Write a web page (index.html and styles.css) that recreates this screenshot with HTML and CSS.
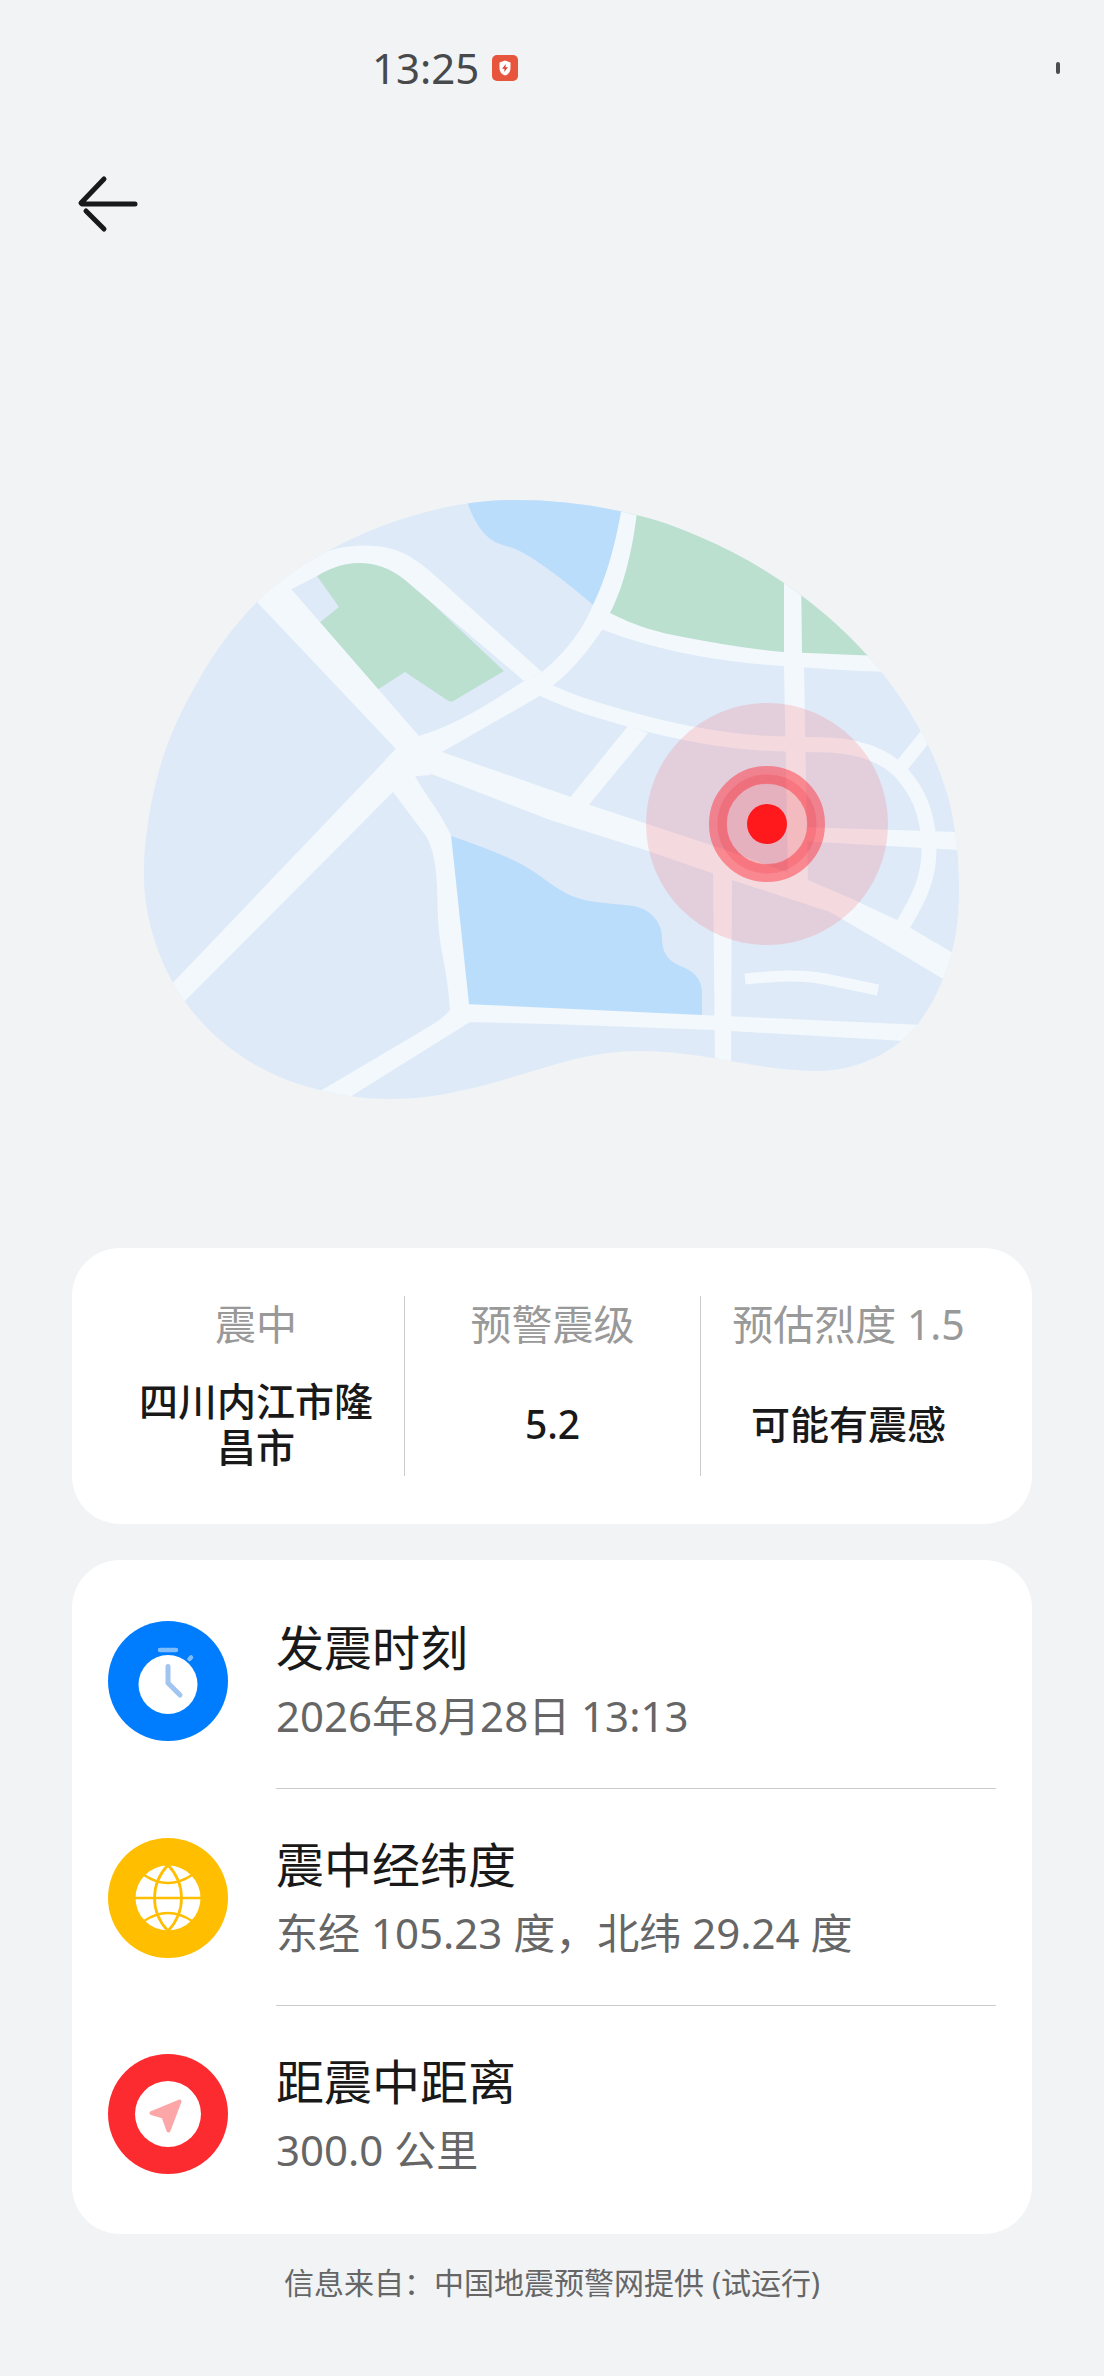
FILE: index.html
```html
<!DOCTYPE html>
<html lang="zh-CN">
<head>
<meta charset="utf-8">
<meta name="viewport" content="width=device-width, initial-scale=1">
<title>地震预警详情</title>
<link rel="stylesheet" href="styles.css">
</head>
<body>
<header class="status-bar">
  <div class="status-clock">
    <time>13:25</time>
    <svg class="status-app" viewBox="0 0 28 28" aria-hidden="true">
      <rect x="1" y="1" width="26" height="26" rx="5" fill="#e8553d"/>
      <path d="M14 6.500 L19.500 8.500 V14 C19.500 18 17 20.500 14 21.500 C11 20.500 8.500 18 8.500 14 V8.500 Z" fill="#fff"/>
      <path d="M14.800 10 L11 14.700 H13.500 L13.200 18 L17 13.300 H14.500 Z" fill="#dd4433"/>
    </svg>
  </div>
  <span class="status-mark"></span>
</header>
<nav class="top-nav">
  <button class="back" type="button" aria-label="返回">
    <svg viewBox="0 0 64 64" aria-hidden="true">
      <path d="M30 7 L7 31 L8 32 H61" /><path d="M12 39 L30 57" />
    </svg>
  </button>
</nav>
<main>
  <svg class="map" viewBox="144 500 816 600" role="img" aria-label="震中位置地图">
    <defs>
      <clipPath id="land">
        <path d="M515 500 C455 500 388 518 328 551 C300 566 278 582 257 602 C232 627 212 656 197 683 C174 722 160 760 152 800 C146 830 143 862 144 880 C145 915 156 952 173 983 C190 1012 210 1034 237 1053 C262 1071 290 1083 320 1090 C343 1096 366 1099 390 1099 C415 1099 440 1096 463 1090 C497 1083 528 1072 560 1063 C588 1055 613 1051 640 1051 C665 1051 689 1054 713 1058 C748 1064 782 1071 817 1071 C848 1071 877 1060 900 1042 C921 1025 933 1003 943 979 C955 950 959 920 959 890 C959 858 956 827 948 797 C941 773 932 751 920 730 C905 702 888 679 867 655 C847 633 826 614 802 596 C770 572 736 552 700 537 C680 528 658 520 636 515 C597 505 556 500 515 500Z"/>
      </clipPath>
    </defs>
    <g clip-path="url(#land)">
      <rect x="140" y="495" width="825" height="610" fill="#deeaf8"/>
      <g fill="#bbddfc">
        <path d="M468 495 V504 C471 513 479 530 488 537 C495 543 502 545 513 548 C532 556 560 576 600 611 L640 500 Z"/>
        <path d="M448 835 C475 844 500 853 523 865 C540 875 550 884 562 891 C583 904 613 903 633 906 C652 909 662 924 662 937 C662 952 667 961 683 967 C697 973 702 982 702 993 V1020 L460 1010 Z"/>
      </g>
      <g fill="#bbe0cf">
        <path d="M317 576 L339 607 L319 623 L377 690 L405 672 L447 700 Q451 703 455 700 L504 671 L420 592 C402 574 385 562 360 562 C344 562 330 568 317 576Z"/>
        <path d="M630 505 L605 620 L780 660 H885 V500 Z"/>
      </g>
      <g fill="#f2f8fc">
        <path d="M240 585 L257 602 L396 749 L442 752 L419 736 L292 590 L270 570Z"/>
        <path d="M396 749 L419 736 L442 752 L430 775 L408 777 L393 792 L385 760Z"/>
        <path d="M240 600 L300 530 L328 551 C350 544 390 541 415 560 C425 566 440 580 452 591 L542 672 L524 681 L405 580 C390 568 375 563 360 563 C340 563 325 571 317 576 L292 589 L257 602Z"/>
        <path d="M165 991 L396 749 L430 755 L416 768 L408 777 L393 792 L180 1006Z"/>
        <path d="M419 736 C450 727 480 710 524 681 L542 672 C560 657 580 636 593 605 C605 580 615 550 623 500 L638 500 C635 540 625 585 610 613 L602 630 C592 645 575 668 556 683 L538 697 L442 752Z"/>
        <path d="M610 613 C635 626 660 633 683 637 C720 644 750 649 783 652 L880 656 L890 672 C850 671 815 668 783 666 C720 662 660 652 595 627Z"/>
        <path d="M784 570 H801 L802 652 L804 668 L808 885 L788 875 L784 666Z"/>
        <path d="M628 726 L648 733 L588 806 L568 800Z"/>
        <path d="M419 736 L442 752 L571 797 L590 805 L720 848 L808 880 L850 898 L897 920 L960 957 L950 983 L883 943 L830 912 L732 880 L645 850 L550 820 L416 768Z"/>
        <path d="M393 792 L412 770 C425 796 435 803 451 835 L469 1004 L470 1022 L450 1011 C448 970 439 950 438 917 C437 887 438 850 423 832Z"/>
        <path d="M452 1007 C445 1018 433 1024 420 1032 L310 1097 L345 1100 L470 1022 L480 1006Z"/>
        <path d="M465 1004 L702 1015 L925 1025 L905 1041 L713 1030 L550 1024 L465 1022Z"/>
        <path d="M713 870 L732 878 L731 1065 H715Z"/>
        <path d="M800 827 L960 832 V850 L800 841Z"/>
      </g>
      <g fill="none" stroke="#f2f8fc">
        <path stroke-width="15" d="M534 685 L545 690 C580 706 600 711 632 720 C690 736 740 743 783 744 L830 745 C870 747 895 762 908 781 C925 803 929 830 929 850 C929 880 918 900 900 930"/>
        <path stroke-width="14" d="M900 768 L932 728"/>
        <path stroke-width="11" d="M745 979 C775 976 800 974 825 979 L878 990"/>
      </g>
    </g>
    <circle cx="767" cy="824" r="121" fill="#ff4048" fill-opacity=".16"/>
    <circle cx="767" cy="824" r="40" fill="#ee3038" fill-opacity=".18"/>
    <circle cx="767" cy="824" r="49" fill="none" stroke="#ff2832" stroke-opacity=".46" stroke-width="18"/>
    <circle cx="767" cy="824" r="45" fill="none" stroke="#f02832" stroke-opacity=".18" stroke-width="9"/>
    <circle cx="767" cy="824" r="20" fill="#ff191d"/>
  </svg>

  <section class="card stats">
    <div class="stat"><h2>震中</h2><p>四川内江市隆昌市</p></div>
    <div class="stat"><h2>预警震级</h2><p>5.2</p></div>
    <div class="stat"><h2>预估烈度 1.5</h2><p>可能有震感</p></div>
  </section>

  <ul class="card details">
    <li>
      <svg class="badge" viewBox="0 0 120 120" aria-hidden="true">
        <circle cx="60" cy="60" r="60" fill="#007dff"/>
        <circle cx="60" cy="63.500" r="29.500" fill="#fff"/>
        <path d="M52 29 H68 M81.500 38 L83 36.500" stroke="#80bdff" stroke-width="4.500" stroke-linecap="round"/>
        <path d="M60 45.500 V62 L72 74" fill="none" stroke="#a1c5f0" stroke-width="5" stroke-linecap="round" stroke-linejoin="round"/>
      </svg>
      <div class="detail"><h2>发震时刻</h2><p>2026年8月28日 13:13</p></div>
    </li>
    <li>
      <svg class="badge" viewBox="0 0 120 120" aria-hidden="true">
        <circle cx="60" cy="60" r="60" fill="#ffbf00"/>
        <circle cx="60" cy="60" r="32.500" fill="#fff"/>
        <path d="M27 60 H93 M60 27 C42 46 42 74 60 93 M60 27 C78 46 78 74 60 93 M36 37 Q60 53 84 37 M36 83 Q60 67 84 83" fill="none" stroke="#ffbf00" stroke-width="2.700"/>
      </svg>
      <div class="detail"><h2>震中经纬度</h2><p>东经 105.23 度，北纬 29.24 度</p></div>
    </li>
    <li>
      <svg class="badge" viewBox="0 0 120 120" aria-hidden="true">
        <circle cx="60" cy="60" r="60" fill="#fc2b2f"/>
        <circle cx="60" cy="60" r="33" fill="#fff"/>
        <path d="M43.500 59 L71.500 47.500 L60.500 76.500 L55.500 62.500 Z" fill="#fca6a8" stroke="#fca6a8" stroke-width="4" stroke-linejoin="round"/>
      </svg>
      <div class="detail"><h2>距震中距离</h2><p>300.0 公里</p></div>
    </li>
  </ul>
</main>
<footer class="source">信息来自：中国地震预警网提供 (试运行)</footer>
</body>
</html>
```
FILE: styles.css
```css
* { box-sizing: border-box; }

body {
  margin: 0;
  background: #f1f3f5;
  color: #191919;
  font-family: "Noto Sans", "Noto Sans CJK SC", sans-serif;
}

h2, p, ul { margin: 0; padding: 0; font-weight: 400; }

.status-bar {
  display: flex;
  align-items: center;
  justify-content: space-between;
  height: 136px;
  padding: 0 44px 0 372px;
}

.status-clock {
  display: flex;
  align-items: center;
  gap: 12px;
  color: #47494b;
  font-size: 42px;
  line-height: 56px;
}

.status-app { width: 28px; height: 28px; }

.status-mark {
  width: 4px;
  height: 12px;
  border-radius: 2px;
  background: #4b4d4f;
}

.top-nav {
  display: flex;
  align-items: center;
  height: 136px;
  padding: 0 72px;
}

.back {
  width: 68px;
  height: 64px;
  padding: 0;
  border: 0;
  background: none;
}

.back svg {
  display: block;
  width: 64px;
  height: 64px;
  margin-left: 2px;
  fill: none;
  stroke: #191919;
  stroke-width: 5;
  stroke-linecap: round;
  stroke-linejoin: round;
}

main { padding: 228px 72px 0; }

.map {
  display: block;
  width: calc(100% - 144px);
  height: auto;
  margin: 0 auto 148px;
}

.card {
  background: #fff;
  border-radius: 48px;
}

.stats {
  display: grid;
  grid-template-columns: repeat(3, 1fr);
  padding: 48px 36px;
}

.stat {
  display: flex;
  flex-direction: column;
  gap: 24px;
  padding: 0 24px;
  text-align: center;
}

.stat + .stat { border-left: 1px solid #ccc; }

.stat h2 {
  margin: 0 -16px;
  color: #999;
  font-size: 41px;
  line-height: 56px;
}

.stat p {
  display: flex;
  flex: 1;
  align-items: center;
  justify-content: center;
  min-height: 100px;
  padding-bottom: 4px;
  font-size: 39px;
  font-weight: 500;
  line-height: 46px;
}

.details {
  margin-top: 36px;
  padding: 12px 36px;
  list-style: none;
}

.details li {
  display: flex;
  align-items: center;
  gap: 48px;
}

.badge { flex: none; width: 120px; height: 120px; }

.detail {
  flex: 1;
  padding: 40px 0;
}

li:not(:last-child) .detail { border-bottom: 1px solid #ccc; }

.detail h2 { font-size: 48px; line-height: 72px; }

.detail p {
  color: #666;
  font-size: 42px;
  line-height: 64px;
}

.source {
  padding: 26px 72px 70px;
  color: #666;
  font-size: 30px;
  line-height: 46px;
  text-align: center;
}
```
